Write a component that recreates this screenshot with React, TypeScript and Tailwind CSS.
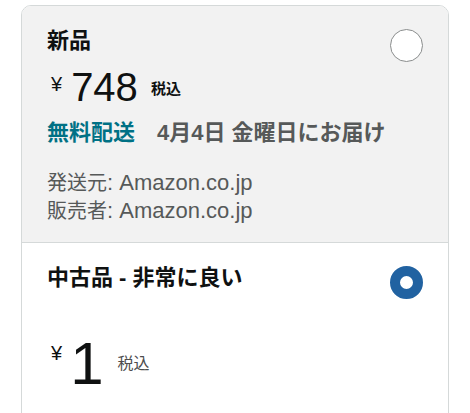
import React from 'react';

interface RadioProps {
  selected: boolean;
}

function Radio({ selected }: RadioProps) {
  if (selected) {
    return (
      <span className="mt-[2px] block h-[33px] w-[33px] shrink-0 rounded-full border-[10px] border-[#2162a1] bg-white" />
    );
  }
  return (
    <span className="mt-[2px] block h-[33px] w-[33px] shrink-0 rounded-full border-[1.5px] border-[#8a8d8d] bg-white" />
  );
}

interface HeaderProps {
  title: string;
  selected: boolean;
}

function OfferHeader({ title, selected }: HeaderProps) {
  return (
    <div className="flex items-start justify-between">
      <h2 className="text-[22px] leading-[28px] font-bold text-[#0f1111]">{title}</h2>
      <Radio selected={selected} />
    </div>
  );
}

function App() {
  return (
    <div className="h-[413px] overflow-hidden bg-white pt-[5px] font-['Liberation_Sans','Noto_Sans_CJK_JP',sans-serif]">
      <div className="ml-[21px] w-[428px] overflow-hidden rounded-t-[10px] border border-[#d5d9d9]">
        {/* new offer */}
        <div className="border-b border-[#d5d9d9] bg-[#f2f2f2] px-[25px] pt-[21px] pb-[17px]">
          <OfferHeader title="新品" selected={false} />

          <div className="mt-[3px] flex h-[44px] items-center pl-[4px] text-[#0f1111]">
            <span className="mt-[9px] self-start text-[20px] leading-none">¥</span>
            <span className="ml-[9px] text-[40px] leading-[44px]">748</span>
            <span className="mt-[3px] ml-[13px] text-[15px] leading-none font-bold">税込</span>
          </div>

          <div className="mt-[10px] flex text-[22px] leading-[28px] font-bold">
            <span className="text-[#007185]">無料配送</span>
            <span className="ml-[22px] text-[#565959]">4月4日 金曜日にお届け</span>
          </div>

          <div className="mt-[22px] text-[20px] leading-[28px] text-[#565959]">
            <p>
              発送元<span className="text-[22px] leading-none">: Amazon.co.jp</span>
            </p>
            <p>
              販売者<span className="text-[22px] leading-none">: Amazon.co.jp</span>
            </p>
          </div>
        </div>

        {/* used offer */}
        <div className="bg-white px-[25px] pt-[21px] pb-[40px]">
          <OfferHeader title="中古品 - 非常に良い" selected={true} />

          <div className="mt-[33px] flex h-[64px] items-center pl-[4px] text-[#0f1111]">
            <span className="mt-[11px] self-start text-[20px] leading-none">¥</span>
            <span className="ml-[8px] text-[60px] leading-[64px]">1</span>
            <span className="ml-[14px] text-[16px] leading-none text-[#4d4d4d]">税込</span>
          </div>
        </div>
      </div>
    </div>
  );
}

export default App;
